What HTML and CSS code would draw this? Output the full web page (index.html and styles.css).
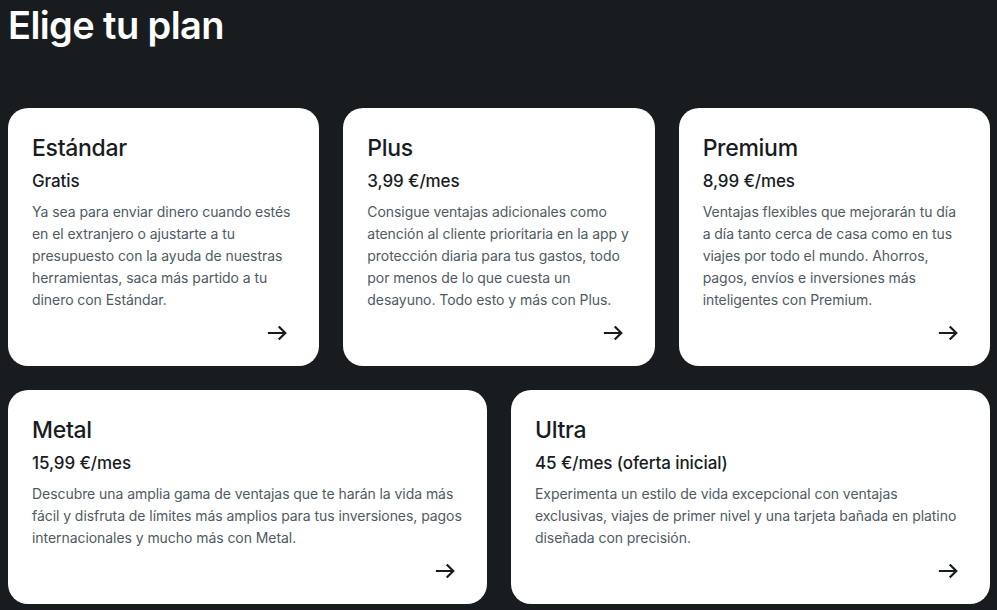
FILE: index.html
```html
<!DOCTYPE html>
<html lang="es">
<head>
<meta charset="utf-8">
<title>Elige tu plan</title>
<link rel="stylesheet" href="styles.css">
</head>
<body>
<main class="page">
  <h1 class="heading">Elige tu plan</h1>
  <section class="row row-3">
    <article class="card">
      <h2 class="card-title">Estándar</h2>
      <p class="card-price">Gratis</p>
      <p class="card-text">Ya sea para enviar dinero cuando estés en el extranjero o ajustarte a tu presupuesto con la ayuda de nuestras herramientas, saca más partido a tu dinero con Estándar.</p>
      <div class="card-foot"><svg class="arrow" viewBox="0 0 24 24" width="24" height="24"><path d="M4 12h16M14.5 6.2l5.8 5.8-5.8 5.8" fill="none" stroke="currentColor" stroke-width="2.2" stroke-linecap="square"/></svg></div>
    </article>
    <article class="card">
      <h2 class="card-title">Plus</h2>
      <p class="card-price">3,99 €/mes</p>
      <p class="card-text">Consigue ventajas adicionales como atención al cliente prioritaria en la app y protección diaria para tus gastos, todo por menos de lo que cuesta un desayuno. Todo esto y más con Plus.</p>
      <div class="card-foot"><svg class="arrow" viewBox="0 0 24 24" width="24" height="24"><path d="M4 12h16M14.5 6.2l5.8 5.8-5.8 5.8" fill="none" stroke="currentColor" stroke-width="2.2" stroke-linecap="square"/></svg></div>
    </article>
    <article class="card">
      <h2 class="card-title">Premium</h2>
      <p class="card-price">8,99 €/mes</p>
      <p class="card-text">Ventajas flexibles que mejorarán tu día a día tanto cerca de casa como en tus viajes por todo el mundo. Ahorros, pagos, envíos e inversiones más inteligentes con Premium.</p>
      <div class="card-foot"><svg class="arrow" viewBox="0 0 24 24" width="24" height="24"><path d="M4 12h16M14.5 6.2l5.8 5.8-5.8 5.8" fill="none" stroke="currentColor" stroke-width="2.2" stroke-linecap="square"/></svg></div>
    </article>
  </section>
  <section class="row row-2">
    <article class="card">
      <h2 class="card-title">Metal</h2>
      <p class="card-price">15,99 €/mes</p>
      <p class="card-text">Descubre una amplia gama de ventajas que te harán la vida más fácil y disfruta de límites más amplios para tus inversiones, pagos internacionales y mucho más con Metal.</p>
      <div class="card-foot"><svg class="arrow" viewBox="0 0 24 24" width="24" height="24"><path d="M4 12h16M14.5 6.2l5.8 5.8-5.8 5.8" fill="none" stroke="currentColor" stroke-width="2.2" stroke-linecap="square"/></svg></div>
    </article>
    <article class="card">
      <h2 class="card-title">Ultra</h2>
      <p class="card-price">45 €/mes (oferta inicial)</p>
      <p class="card-text">Experimenta un estilo de vida excepcional con ventajas exclusivas, viajes de primer nivel y una tarjeta bañada en platino diseñada con precisión.</p>
      <div class="card-foot"><svg class="arrow" viewBox="0 0 24 24" width="24" height="24"><path d="M4 12h16M14.5 6.2l5.8 5.8-5.8 5.8" fill="none" stroke="currentColor" stroke-width="2.2" stroke-linecap="square"/></svg></div>
    </article>
  </section>
</main>
</body>
</html>
```

FILE: styles.css
```css
html, body {
  margin: 0;
  padding: 0;
  background: #191c1f;
}
body {
  font-family: Inter, "Noto Sans", sans-serif;
  color: #191c1f;
}
.page {
  width: 982px;
  padding: 0 0 0 8px;
}
.heading {
  margin: 0;
  padding-top: 3px;
  height: 108px;
  box-sizing: border-box;
  font-size: 38px;
  line-height: 44px;
  font-weight: 600;
  letter-spacing: -0.6px;
  color: #ffffff;
}
.row {
  display: grid;
  gap: 24px;
  margin-bottom: 24px;
}
.row-3 { grid-template-columns: repeat(3, 1fr); }
.row-2 { grid-template-columns: repeat(2, 1fr); }
.card {
  background: #ffffff;
  border-radius: 20px;
  padding: 24px 24px 21px;
  display: flex;
  flex-direction: column;
}
.card-title {
  margin: 0;
  font-size: 23px;
  line-height: 32px;
  font-weight: 500;
  letter-spacing: -0.3px;
}
.card-price {
  margin: 5px 0 0;
  font-size: 17px;
  line-height: 24px;
  font-weight: 500;
  letter-spacing: -0.1px;
}
.card-text {
  margin: 8px 0 0;
  font-size: 14px;
  line-height: 22px;
  letter-spacing: -0.06px;
  color: #505a63;
}
.card-foot {
  display: flex;
  justify-content: flex-end;
  margin-top: 10px;
  padding-right: 6px;
}
.arrow {
  display: block;
  color: #191c1f;
}
```
